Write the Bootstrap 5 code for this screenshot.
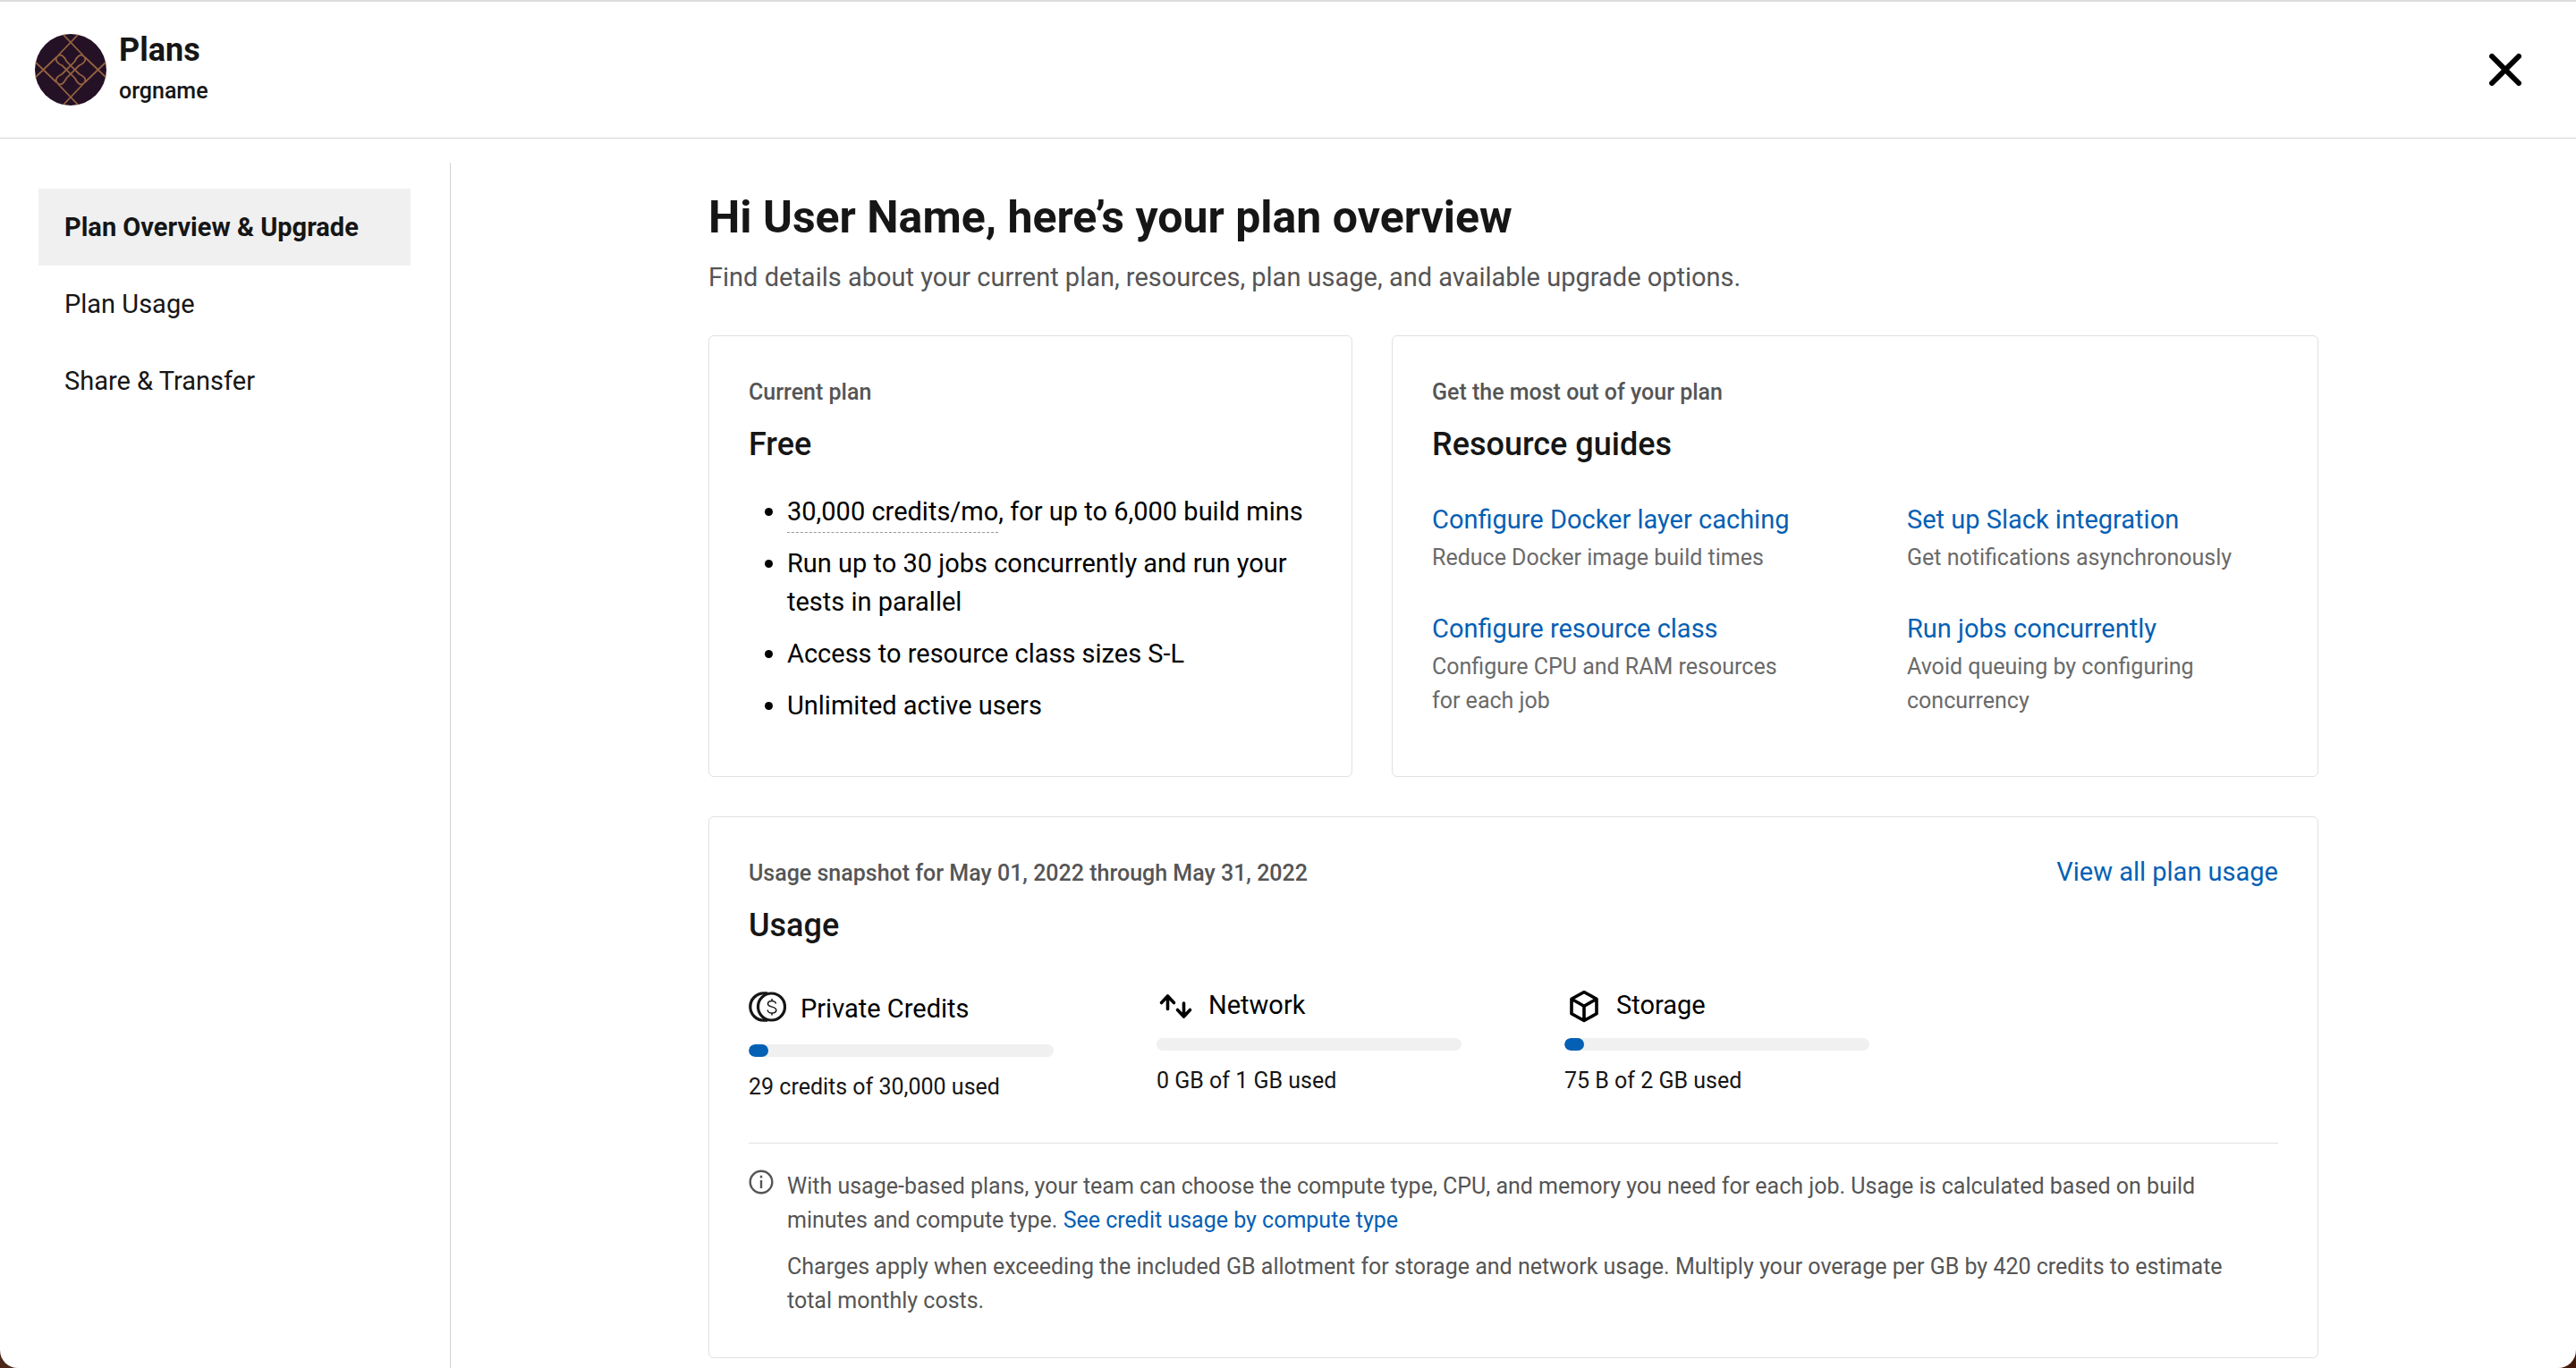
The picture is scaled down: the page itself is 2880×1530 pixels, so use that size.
<!DOCTYPE html>
<html lang="en">
<head>
<meta charset="utf-8">
<meta name="viewport" content="width=device-width, initial-scale=1">
<title>Plans</title>
<link href="https://cdn.jsdelivr.net/npm/bootstrap@5.3.0/dist/css/bootstrap.min.css" rel="stylesheet">
<style>
  :root { --ink: #161616; --soft: #555; --faint: #6a6a6a; --line: #d4d4d4; --hairline: #e1e1e1; --brand: #0460b4; --fill: #f0f0f0; }
  body { font-family: Roboto, "Liberation Sans", sans-serif; font-size: 29px; line-height: 43px; color: var(--ink); background: linear-gradient(90deg, #4c281a, #45190b); }
  a { color: var(--brand); text-decoration: none; }
  a:hover { text-decoration: underline; }
  .shell { background: #fff; border-top: 2px solid #ddd; border-radius: 0 0 20px 20px; }
  .topbar { padding: 30px 61px 30px 39px; border-bottom: 1px solid var(--line); }
  .brand-row { gap: 14px; }
  .topbar-title { font-size: 36px; line-height: 48px; font-weight: 700; margin: 0; }
  .org { font-size: 25px; line-height: 44px; font-weight: 500; }
  .close-btn { color: #000; line-height: 0; }
  .sidebar { width: 504px; margin-top: 27px; padding: 29px 44px 29px 43px; border-right: 1px solid var(--line); }
  .sidebar .nav-link { color: var(--ink); padding: 22px 29px 21px; }
  .sidebar .nav-link.active { background: var(--fill); font-weight: 700; }
  .content-area { padding: 56px 44px 11px; min-width: 0; }
  .content-inner { max-width: 1800px; }
  .page-title { font-size: 50px; line-height: 64px; font-weight: 700; margin: 0 0 14px; }
  .page-sub { color: var(--soft); line-height: 42px; margin: 0 0 44px; }
  .tiles { gap: 44px; }
  .tile { border: 1px solid var(--hairline); border-radius: 6px; padding: 44px; color: inherit; }
  .tile-plan { flex: 0 0 40%; }
  .tile-label { font-size: 25px; line-height: 38px; font-weight: 500; color: var(--soft); margin: 0 0 14px; }
  .tile-title { font-size: 36px; line-height: 50px; font-weight: 500; margin: 0; }
  .feature-list { color: #000; margin: 29px 0 13px; padding-left: 43px; }
  .feature-list li + li { margin-top: 15px; }
  .hint { border-bottom: 1px dashed #999; padding-bottom: 6px; }
  .guides { display: grid; grid-template-columns: 1fr 1fr; gap: 39px 116px; margin-top: 38px; }
  .guides a { display: block; line-height: 42px; margin-bottom: 3px; }
  .guides p { font-size: 25px; line-height: 38px; color: var(--faint); margin: 0; }
  .view-all { line-height: 34px; }
  .meters { gap: 115px; margin-top: 43px; }
  .meter { width: 341px; }
  .meter-head { gap: 16px; color: #000; margin-bottom: 15px; }
  .meter .progress { height: 14px; border-radius: 7px; background: var(--fill); margin-bottom: 15px; }
  .meter .progress-bar { background: var(--brand); border-radius: 7px; min-width: 22px; }
  .meter .progress-bar.is-empty { min-width: 0; }
  .meter-text { font-size: 25px; line-height: 38px; }
  .notes { border-top: 1px solid var(--hairline); margin-top: 43px; padding: 29px 26px 0 0; gap: 15px; font-size: 25px; line-height: 38px; color: var(--soft); }
  .notes p { margin: 0; }
  .notes p + p { margin-top: 14px; }
  svg { display: block; flex: none; }
</style>
</head>
<body>
<div class="shell min-vh-100 d-flex flex-column">
  <header class="topbar d-flex justify-content-between align-items-center">
    <div class="brand-row d-flex align-items-center">
      <svg width="80" height="80" viewBox="0 0 80 80" aria-hidden="true">
        <defs>
          <clipPath id="disc"><circle cx="40" cy="40" r="40"/></clipPath>
          <path id="petals" d="M40 36.700H50C54 35 61 34 61 40S54 45 50 43.300H30C26 45 19 46 19 40S26 35 30 36.700Z"/>
        </defs>
        <g clip-path="url(#disc)" fill="none" stroke="#94633f" stroke-width="1.800">
          <rect width="80" height="80" fill="#251126" stroke="none"/>
          <path d="M49 0 26 24M31 0 54 24M49 80 26 56M31 80 54 56M0 31 24 54M0 49 24 26M80 31 56 54M80 49 56 26"/>
          <use href="#petals" transform="rotate(45 40 40)"/>
          <use href="#petals" transform="rotate(-45 40 40)"/>
        </g>
      </svg>
      <div>
        <h2 class="topbar-title">Plans</h2>
        <div class="org">orgname</div>
      </div>
    </div>
    <button type="button" class="close-btn btn p-0 border-0" aria-label="Close">
      <svg width="36" height="36" viewBox="0 0 36 36" fill="none" stroke="currentColor" stroke-width="6" stroke-linecap="round"><path d="M3 3 33 33M33 3 3 33"/></svg>
    </button>
  </header>

  <div class="d-flex flex-grow-1">
    <aside class="sidebar flex-shrink-0">
      <nav class="nav flex-column" aria-label="Plan sections">
        <a class="nav-link active" aria-current="page" href="#">Plan Overview &amp; Upgrade</a>
        <a class="nav-link" href="#">Plan Usage</a>
        <a class="nav-link" href="#">Share &amp; Transfer</a>
      </nav>
    </aside>

    <main class="content-area flex-grow-1">
      <div class="content-inner mx-auto">
        <h1 class="page-title">Hi User Name, here’s your plan overview</h1>
        <p class="page-sub">Find details about your current plan, resources, plan usage, and available upgrade options.</p>

        <div class="tiles d-flex flex-column">
          <div class="tiles d-flex">
            <section class="tile tile-plan">
              <p class="tile-label">Current plan</p>
              <h2 class="tile-title">Free</h2>
              <ul class="feature-list">
                <li><span class="hint">30,000 credits/mo</span>, for up to 6,000 build mins</li>
                <li>Run up to 30 jobs concurrently and run your tests in parallel</li>
                <li>Access to resource class sizes S-L</li>
                <li>Unlimited active users</li>
              </ul>
            </section>
            <section class="tile flex-grow-1">
              <p class="tile-label">Get the most out of your plan</p>
              <h2 class="tile-title">Resource guides</h2>
              <div class="guides">
                <div><a href="#">Configure Docker layer caching</a><p>Reduce Docker image build times</p></div>
                <div><a href="#">Set up Slack integration</a><p>Get notifications asynchronously</p></div>
                <div><a href="#">Configure resource class</a><p>Configure CPU and RAM resources for each job</p></div>
                <div><a href="#">Run jobs concurrently</a><p>Avoid queuing by configuring concurrency</p></div>
              </div>
            </section>
          </div>

          <section class="tile">
            <div class="d-flex justify-content-between align-items-start">
              <div>
                <p class="tile-label">Usage snapshot for May 01, 2022 through May 31, 2022</p>
                <h2 class="tile-title">Usage</h2>
              </div>
              <a class="view-all" href="#">View all plan usage</a>
            </div>

            <div class="meters d-flex align-items-start">
              <div class="meter">
                <div class="meter-head d-flex align-items-center">
                  <svg width="42" height="50" viewBox="0 0 42 50" fill="none" stroke="#161616" aria-hidden="true">
                    <circle cx="25.500" cy="23" r="15" stroke-width="3.200"/>
                    <path d="M21 7.800H17A15.200 15.200 0 0 0 17 38.200H21" stroke-width="3.200"/>
                    <path d="M30.500 19.500C30 17.500 28.200 16.500 26 16.500c-2.500 0-4.500 1.200-4.500 3.200 0 4.500 9.300 2.300 9.300 7 0 2.200-2.100 3.300-4.700 3.300-2.800 0-4.700-1.300-5-3.500M26 14v2.500M26 30v2.500" stroke-width="1.500"/>
                  </svg>
                  <span>Private Credits</span>
                </div>
                <div class="progress" role="progressbar" aria-label="Private credits used" aria-valuenow="29" aria-valuemin="0" aria-valuemax="30000"><div class="progress-bar" style="width: 0.1%"></div></div>
                <div class="meter-text">29 credits of 30,000 used</div>
              </div>
              <div class="meter">
                <div class="meter-head d-flex align-items-center">
                  <svg width="42" height="42" viewBox="0 0 42 42" fill="none" stroke="#000" stroke-width="3.600" stroke-linecap="round" stroke-linejoin="round" aria-hidden="true">
                    <path d="M12.500 24.500V10.500M5.500 17.500 12.500 10 19.500 17.500M30.500 18V32M23.500 25.500 30.500 33 37.500 25.500"/>
                  </svg>
                  <span>Network</span>
                </div>
                <div class="progress" role="progressbar" aria-label="Network used" aria-valuenow="0" aria-valuemin="0" aria-valuemax="100"><div class="progress-bar is-empty" style="width: 0%"></div></div>
                <div class="meter-text">0 GB of 1 GB used</div>
              </div>
              <div class="meter">
                <div class="meter-head d-flex align-items-center">
                  <svg width="42" height="42" viewBox="0 0 42 42" fill="none" stroke="#000" stroke-width="3.600" stroke-linejoin="round" aria-hidden="true">
                    <path d="M22 5.500 36 13.300V29.700L22 37.500 8 29.700V13.300ZM8 13.300 22 21.200 36 13.300M22 21.200V37"/>
                  </svg>
                  <span>Storage</span>
                </div>
                <div class="progress" role="progressbar" aria-label="Storage used" aria-valuenow="0" aria-valuemin="0" aria-valuemax="100"><div class="progress-bar" style="width: 0.1%"></div></div>
                <div class="meter-text">75 B of 2 GB used</div>
              </div>
            </div>

            <div class="notes d-flex align-items-start">
              <svg width="28" height="28" viewBox="0 0 28 28" fill="none" stroke="#555" stroke-width="2.400" aria-hidden="true">
                <circle cx="14" cy="14" r="12.300"/><path d="M14 12V21M14 6.800V9.400"/>
              </svg>
              <div>
                <p>With usage-based plans, your team can choose the compute type, CPU, and memory you need for each job. Usage is calculated based on build minutes and compute type. <a href="#">See credit usage by compute type</a></p>
                <p>Charges apply when exceeding the included GB allotment for storage and network usage. Multiply your overage per GB by 420 credits to estimate total monthly costs.</p>
              </div>
            </div>
          </section>
        </div>
      </div>
    </main>
  </div>
</div>
<script src="https://cdn.jsdelivr.net/npm/bootstrap@5.3.0/dist/js/bootstrap.bundle.min.js"></script>
</body>
</html>
